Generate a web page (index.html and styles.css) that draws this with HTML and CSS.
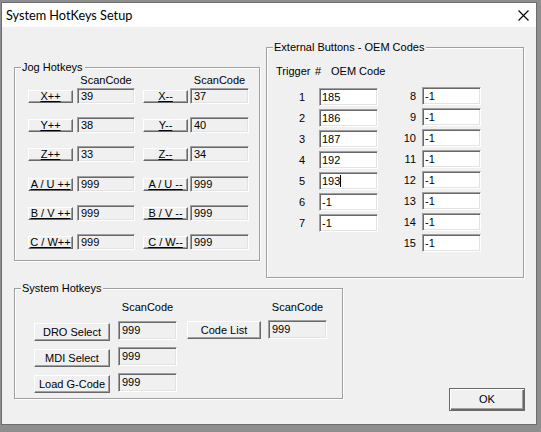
FILE: index.html
```html
<!DOCTYPE html>
<html>
<head>
<meta charset="utf-8">
<link rel="stylesheet" href="styles.css">
</head>
<body>
<div class="window">
  <div class="titlebar">
    <span class="title">System HotKeys Setup</span>
    <svg class="close" width="11" height="11" viewBox="0 0 11 11"><path d="M0.5 0.5 L10.5 10.5 M10.5 0.5 L0.5 10.5" stroke="#000" stroke-width="1.1" fill="none"/></svg>
  </div>
  <div class="client">
    <div class="top">
      <div class="group jog">
        <span class="legend">Jog Hotkeys</span>
        <div class="jog-head"><span class="sc sc1">ScanCode</span><span class="sc sc2">ScanCode</span></div>
        <div class="jog-row"><button class="btn jb">X++</button><div class="field ro f1">39</div><button class="btn jb b2">X--</button><div class="field ro f2">37</div></div>
        <div class="jog-row"><button class="btn jb">Y++</button><div class="field ro f1">38</div><button class="btn jb b2">Y--</button><div class="field ro f2">40</div></div>
        <div class="jog-row tall"><button class="btn jb">Z++</button><div class="field ro f1">33</div><button class="btn jb b2">Z--</button><div class="field ro f2">34</div></div>
        <div class="jog-row"><button class="btn jb">A / U ++</button><div class="field ro f1">999</div><button class="btn jb b2">A / U --</button><div class="field ro f2">999</div></div>
        <div class="jog-row"><button class="btn jb">B / V ++</button><div class="field ro f1">999</div><button class="btn jb b2">B / V --</button><div class="field ro f2">999</div></div>
        <div class="jog-row"><button class="btn jb">C / W++</button><div class="field ro f1">999</div><button class="btn jb b2">C / W--</button><div class="field ro f2">999</div></div>
      </div>
      <div class="group ext">
        <span class="legend">External Buttons - OEM Codes</span>
        <div class="ext-head"><span class="trig">Trigger</span><span class="hash">#</span><span class="oemh">OEM Code</span></div>
        <div class="oem-cols">
          <div class="oem-col left">
            <div class="oem-row"><span class="num">1</span><div class="field wh">185</div></div>
            <div class="oem-row"><span class="num">2</span><div class="field wh">186</div></div>
            <div class="oem-row"><span class="num">3</span><div class="field wh">187</div></div>
            <div class="oem-row"><span class="num">4</span><div class="field wh">192</div></div>
            <div class="oem-row"><span class="num">5</span><div class="field wh">193<span class="caret"></span></div></div>
            <div class="oem-row"><span class="num">6</span><div class="field wh">-1</div></div>
            <div class="oem-row"><span class="num">7</span><div class="field wh">-1</div></div>
          </div>
          <div class="oem-col right">
            <div class="oem-row"><span class="num">8</span><div class="field wh">-1</div></div>
            <div class="oem-row"><span class="num">9</span><div class="field wh">-1</div></div>
            <div class="oem-row"><span class="num">10</span><div class="field wh">-1</div></div>
            <div class="oem-row"><span class="num">11</span><div class="field wh">-1</div></div>
            <div class="oem-row"><span class="num">12</span><div class="field wh">-1</div></div>
            <div class="oem-row"><span class="num">13</span><div class="field wh">-1</div></div>
            <div class="oem-row"><span class="num">14</span><div class="field wh">-1</div></div>
            <div class="oem-row"><span class="num">15</span><div class="field wh">-1</div></div>
          </div>
        </div>
      </div>
    </div>
    <div class="bottom">
      <div class="group sys">
        <span class="legend">System Hotkeys</span>
        <div class="sys-cols">
          <div class="sys-col sleft">
            <div class="sys-head"><span class="sc">ScanCode</span></div>
            <div class="sys-row"><button class="btn sb">DRO Select</button><div class="field ro sf">999</div></div>
            <div class="sys-row"><button class="btn sb">MDI Select</button><div class="field ro sf">999</div></div>
            <div class="sys-row"><button class="btn sb">Load G-Code</button><div class="field ro sf">999</div></div>
          </div>
          <div class="sys-col sright">
            <div class="sys-head"><span class="sc">ScanCode</span></div>
            <div class="sys-row"><button class="btn sb cl">Code List</button><div class="field ro sf">999</div></div>
          </div>
        </div>
      </div>
      <button class="btn ok">OK</button>
    </div>
  </div>
</div>
</body>
</html>
```

FILE: styles.css
```css
html, body {
  margin: 0;
  padding: 0;
}
body {
  background: #8e8e8e;
  width: 541px;
  height: 432px;
  overflow: hidden;
  font-family: "Liberation Sans", Arial, sans-serif;
  font-size: 11px;
  color: #000;
}
.window {
  box-sizing: border-box;
  margin: 2px 0 0 1px;
  width: 536px;
  height: 423px;
  border: 1px solid #6d6d6d;
  background: #f0f0f0;
  display: flex;
  flex-direction: column;
}
.titlebar {
  height: 24px;
  background: #fff;
  display: flex;
  align-items: center;
  padding-left: 4px;
  flex: none;
}
.title {
  font-family: Lato, "Liberation Sans", sans-serif;
  font-size: 12.7px;
  color: #000;
  flex: 1;
}
.close {
  margin-right: 7px;
  margin-top: 0px;
}
.client {
  flex: 1;
  padding: 20px 0 0 12px;
}
.top {
  display: flex;
  align-items: flex-start;
  gap: 6px;
}
.group {
  position: relative;
  box-sizing: border-box;
  border: 1px solid #a0a0a0;
  box-shadow: 1px 1px 0 #fff, inset 1px 1px 0 #fff;
}
.legend {
  position: absolute;
  top: -7px;
  left: 6px;
  padding: 0 2px 0 1px;
  background: #f0f0f0;
  line-height: 13px;
}
.btn {
  box-sizing: border-box;
  margin: 0;
  padding: 0;
  border: 1px solid;
  border-color: #fff #696969 #696969 #fff;
  box-shadow: inset -1px -1px 0 #a0a0a0;
  background: #f0f0f0;
  font-family: "Liberation Sans", Arial, sans-serif;
  font-size: 11px;
  color: #000;
  text-align: center;
}
.field {
  box-sizing: border-box;
  border: 1px solid;
  border-color: #a0a0a0 #fff #fff #a0a0a0;
  box-shadow: inset 1px 1px 0 #696969, inset -1px -1px 0 #e3e3e3;
  padding-left: 3px;
  white-space: nowrap;
}
.field.ro {
  background: #f0f0f0;
}
.field.wh {
  background: #fff;
}

/* Jog */
.jog {
  width: 246px;
  height: 194px;
  margin-top: 20px;
  padding: 6px 0 0 13px;
}
.jog-head {
  display: flex;
  height: 13px;
  line-height: 13px;
  margin-bottom: 1px;
}
.jog-head .sc {
  text-align: center;
}
.sc1 {
  width: 58px;
  margin-left: 49px;
}
.sc2 {
  width: 59px;
  margin-left: 55px;
}
.jog-row {
  display: flex;
  align-items: center;
  height: 16px;
  margin-bottom: 13px;
}
.jog-row.tall {
  margin-bottom: 14px;
}
.jb {
  width: 45px;
  height: 13px;
  line-height: 10px;
  text-decoration: underline;
  white-space: nowrap;
  overflow: hidden;
}
.jb.b2 {
  margin-left: 8px;
}
.jog-row .field {
  height: 16px;
  line-height: 14px;
}
.f1 {
  width: 58px;
  margin-left: 4px;
}
.f2 {
  width: 59px;
  margin-left: 2px;
}

/* External */
.ext {
  width: 258px;
  height: 231px;
  padding: 17px 0 0 9px;
}
.ext-head {
  display: flex;
  height: 13px;
  line-height: 13px;
}
.trig {
  width: 39px;
}
.hash {
  width: 16px;
}
.oem-cols {
  display: flex;
  align-items: flex-start;
}
.oem-col {
  display: flex;
  flex-direction: column;
  gap: 3px;
}
.oem-col.left {
  margin-left: 14px;
  margin-top: 10px;
}
.oem-col.right {
  margin-left: 18px;
  margin-top: 9px;
}
.oem-row {
  display: flex;
  align-items: center;
  height: 18px;
}
.oem-row .field {
  width: 59px;
  height: 18px;
  line-height: 16px;
  padding-left: 2px;
  position: relative;
}
.left .num {
  width: 24px;
  margin-right: 5px;
  text-align: center;
}
.right .num {
  width: 20px;
  margin-right: 6px;
  text-align: right;
}
.caret {
  display: inline-block;
  width: 1px;
  height: 12px;
  background: #000;
  vertical-align: -2px;
}

/* Bottom */
.bottom {
  display: flex;
  align-items: flex-start;
  margin-top: 10px;
}
.sys {
  width: 329px;
  height: 111px;
  padding: 12px 0 0 19px;
}
.sys-cols {
  display: flex;
  align-items: flex-start;
}
.sys-head {
  display: flex;
  height: 13px;
  line-height: 13px;
}
.sys-head .sc {
  width: 59px;
  text-align: center;
}
.sleft .sys-head .sc {
  margin-left: 84px;
}
.sright {
  margin-left: 10px;
}
.sright .sys-head .sc {
  margin-left: 81px;
}
.sys-row {
  display: flex;
  align-items: flex-start;
  margin-top: 7px;
  height: 19px;
}
.sright .sys-row {
  margin-top: 6px;
}
.sb {
  width: 76px;
  height: 18px;
  margin-top: 2px;
  line-height: 15px;
}
.sb.cl {
  width: 74px;
  margin-top: 1px;
}
.sf {
  width: 59px;
  height: 19px;
  line-height: 16px;
  margin-left: 8px;
}
.sright .sf {
  margin-left: 7px;
}
.ok {
  width: 76px;
  height: 23px;
  margin: 100px 0 0 106px;
  border: 1px solid #6a6a6a;
  box-shadow: inset 1px 1px 0 #fff, inset -1px -1px 0 #696969, inset -2px -2px 0 #a0a0a0;
  line-height: 19px;
}
```
